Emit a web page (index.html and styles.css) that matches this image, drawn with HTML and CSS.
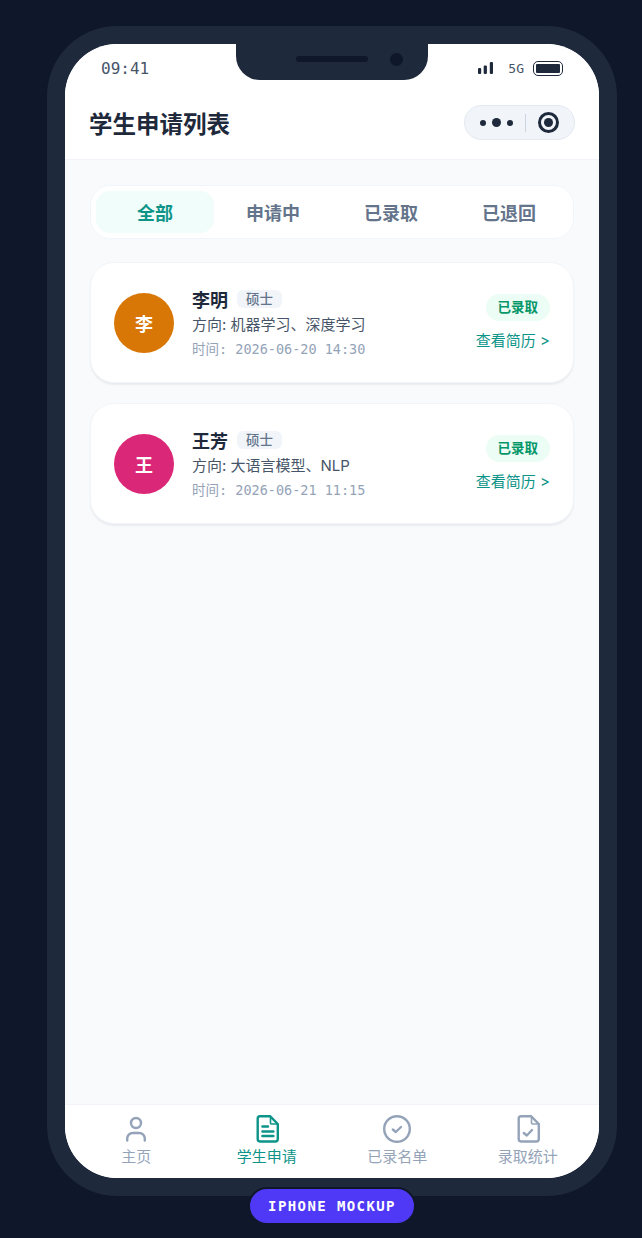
FILE: index.html
```html
<!DOCTYPE html>
<html lang="zh-CN">
<head>
  <meta charset="UTF-8" />
  <meta name="viewport" content="width=device-width, initial-scale=1.0"/>
  <title>学生申请列表</title>
  <link rel="stylesheet" href="styles.css">
</head>
<body>
  <div class="phone">
    <div class="notch">
      <span class="speaker"></span>
      <span class="camera"></span>
    </div>

    <div class="screen">
      <div class="status-bar">
        <span class="clock">09:41</span>
        <div class="status-icons">
          <svg class="signal" width="15" height="12" viewBox="0 0 15 12">
            <rect x="0" y="6" width="3.200" height="6" rx="1"></rect>
            <rect x="5.700" y="3.500" width="3.200" height="8.500" rx="1"></rect>
            <rect x="11.800" y="0" width="3.200" height="12" rx="1"></rect>
          </svg>
          <span class="net">5G</span>
          <span class="battery"><span class="battery-fill"></span></span>
        </div>
      </div>

      <header class="header">
        <h1>学生申请列表</h1>
        <div class="capsule">
          <div class="dots">
            <span class="dot"></span>
            <span class="dot big"></span>
            <span class="dot"></span>
          </div>
          <span class="capsule-line"></span>
          <span class="target"><span class="target-core"></span></span>
        </div>
      </header>

      <main class="content">
        <div class="tabs">
          <div class="tab active">全部</div>
          <div class="tab">申请中</div>
          <div class="tab">已录取</div>
          <div class="tab">已退回</div>
        </div>

        <div class="card">
          <div class="avatar orange">李</div>
          <div class="info">
            <div class="name-row">
              <span class="name">李明</span>
              <span class="degree">硕士</span>
            </div>
            <div class="topic">方向: 机器学习、深度学习</div>
            <div class="time">时间: 2026-06-20 14:30</div>
          </div>
          <div class="side">
            <span class="status">已录取</span>
            <a class="link">查看简历 &gt;</a>
          </div>
        </div>

        <div class="card">
          <div class="avatar pink">王</div>
          <div class="info">
            <div class="name-row">
              <span class="name">王芳</span>
              <span class="degree">硕士</span>
            </div>
            <div class="topic">方向: 大语言模型、NLP</div>
            <div class="time">时间: 2026-06-21 11:15</div>
          </div>
          <div class="side">
            <span class="status">已录取</span>
            <a class="link">查看简历 &gt;</a>
          </div>
        </div>
      </main>

      <nav class="tabbar">
        <div class="nav-item">
          <svg viewBox="0 0 30 30" width="30" height="30" fill="none" stroke="currentColor" stroke-width="2.400" stroke-linecap="round" stroke-linejoin="round">
            <circle cx="15" cy="9" r="5"></circle>
            <path d="M6.200 26.500v-2a5.500 5.500 0 0 1 5.500-5.500h6.600a5.500 5.500 0 0 1 5.500 5.500v2"></path>
          </svg>
          <span>主页</span>
        </div>
        <div class="nav-item active">
          <svg viewBox="0 0 30 30" width="30" height="30" fill="none" stroke="currentColor" stroke-width="2.400" stroke-linecap="round" stroke-linejoin="round">
            <path d="M8 2.200h10L25.800 10v15a2.500 2.500 0 0 1-2.500 2.500H8A2.500 2.500 0 0 1 5.700 25V4.500A2.300 2.300 0 0 1 8 2.200z"></path>
            <path d="M18.500 2.500v6.500a1 1 0 0 0 1 1h6" stroke-width="1.600"></path>
            <path d="M10.400 12.500h5.600M10.400 17.500h11M10.400 22h11"></path>
          </svg>
          <span>学生申请</span>
        </div>
        <div class="nav-item">
          <svg viewBox="0 0 30 30" width="30" height="30" fill="none" stroke="currentColor" stroke-width="2.400" stroke-linecap="round" stroke-linejoin="round">
            <circle cx="15" cy="15" r="12.800"></circle>
            <path d="M10.800 15.500l3 2.500 5.200-5"></path>
          </svg>
          <span>已录名单</span>
        </div>
        <div class="nav-item">
          <svg viewBox="0 0 30 30" width="30" height="30" fill="none" stroke="currentColor" stroke-width="2.400" stroke-linecap="round" stroke-linejoin="round">
            <path d="M8 2.200h10L25.800 10v15a2.500 2.500 0 0 1-2.500 2.500H8A2.500 2.500 0 0 1 5.700 25V4.500A2.300 2.300 0 0 1 8 2.200z"></path>
            <path d="M18.500 2.500v6.500a1 1 0 0 0 1 1h6" stroke-width="1.600"></path>
            <path d="M10.800 19l3 2.500 5.200-5.500"></path>
          </svg>
          <span>录取统计</span>
        </div>
      </nav>
    </div>

    <div class="mock-label">IPHONE MOCKUP</div>
  </div>
</body>
</html>
```

FILE: styles.css
```css
* {
  box-sizing: border-box;
}

html, body {
  margin: 0;
  height: 100%;
}

body {
  background-color: #0f172a;
  font-family: Inter, "Noto Sans CJK SC", sans-serif;
  padding: 26px 25px 0 47px;
  overflow: hidden;
}

.phone {
  position: relative;
  width: 570px;
  height: 1170px;
  padding: 18px;
  background: #1e293b;
  border-radius: 70px;
}

.notch {
  position: absolute;
  top: 18px;
  left: 189px;
  width: 192px;
  height: 36px;
  background: #1e293b;
  border-radius: 0 0 24px 24px;
  z-index: 2;
}

.speaker {
  position: absolute;
  top: 12px;
  left: 60px;
  width: 72px;
  height: 6px;
  background: #0f172a;
  border-radius: 3px;
}

.camera {
  position: absolute;
  top: 9px;
  left: 154px;
  width: 13px;
  height: 13px;
  background: #0f172a;
  border-radius: 50%;
}

.screen {
  display: flex;
  flex-direction: column;
  height: 100%;
  background: #f8fafc;
  border-radius: 52px;
  overflow: hidden;
}

.status-bar {
  display: flex;
  justify-content: space-between;
  align-items: center;
  height: 48px;
  padding: 0 36px;
  background: #fff;
  color: #475569;
}

.clock {
  font-family: "DejaVu Sans Mono", monospace;
  font-size: 16px;
}

.status-icons {
  display: flex;
  align-items: center;
}

.signal {
  fill: #1e293b;
}

.net {
  margin-left: 15px;
  font-family: "DejaVu Sans Mono", monospace;
  font-size: 13px;
}

.battery {
  display: block;
  width: 30px;
  height: 15px;
  margin-left: 9px;
  padding: 2px;
  border: 1px solid #1e293b;
  border-radius: 5px;
}

.battery-fill {
  display: block;
  height: 100%;
  background: #1e293b;
  border-radius: 1px;
}

.header {
  display: flex;
  justify-content: space-between;
  align-items: center;
  height: 68px;
  padding: 0 24px 6px 24px;
  background: #fff;
  border-bottom: 1px solid #f1f5f9;
}

.header h1 {
  margin: 0;
  color: #1e293b;
  font-size: 23.500px;
  font-weight: 700;
}

.capsule {
  display: flex;
  align-items: center;
  width: 111px;
  height: 35px;
  padding: 0 15px;
  background: #f1f5f9;
  border: 1px solid #e2e8f0;
  border-radius: 18px;
}

.dots {
  display: flex;
  align-items: center;
  gap: 6px;
}

.dot {
  width: 6px;
  height: 6px;
  background: #1e293b;
  border-radius: 50%;
}

.dot.big {
  width: 9px;
  height: 9px;
}

.capsule-line {
  width: 1px;
  height: 18px;
  margin: 0 12px;
  background: #cbd5e1;
}

.target {
  display: flex;
  justify-content: center;
  align-items: center;
  width: 21px;
  height: 21px;
  border: 3px solid #1e293b;
  border-radius: 50%;
}

.target-core {
  width: 9px;
  height: 9px;
  background: #1e293b;
  border-radius: 50%;
}

.content {
  flex: 1;
  padding: 25px 25px 0;
}

.tabs {
  display: flex;
  height: 54px;
  margin-bottom: 23px;
  padding: 5px;
  background: #fff;
  border: 1px solid #f1f5f9;
  border-radius: 20px;
}

.tab {
  flex: 1;
  display: flex;
  justify-content: center;
  align-items: center;
  color: #64748b;
  font-size: 18px;
  font-weight: 700;
  border-radius: 14px;
}

.tab.active {
  background: #f0fdfa;
  color: #0d9488;
}

.card {
  display: flex;
  align-items: center;
  height: 121px;
  margin-bottom: 20px;
  padding: 0 23px;
  background: #fff;
  border: 1px solid #f1f5f9;
  border-radius: 24px;
  box-shadow: 0 2px 2px rgba(15, 23, 42, 0.06);
}

.avatar {
  display: flex;
  justify-content: center;
  align-items: center;
  flex-shrink: 0;
  width: 60px;
  height: 60px;
  color: #fff;
  font-size: 18px;
  font-weight: 700;
  border-radius: 50%;
}

.avatar.orange {
  background: #d97706;
}

.avatar.pink {
  background: #db2777;
}

.info {
  flex: 1;
  margin-left: 18px;
}

.name-row {
  display: flex;
  align-items: center;
  gap: 9px;
  height: 24px;
}

.name {
  color: #1e293b;
  font-size: 18px;
  font-weight: 700;
}

.degree {
  padding: 0 9px;
  height: 18px;
  line-height: 18px;
  background: #f1f5f9;
  color: #64748b;
  font-size: 13.500px;
  font-weight: 500;
  border-radius: 6px;
}

.topic {
  margin-top: 4px;
  color: #475569;
  font-size: 15px;
  line-height: 20px;
}

.time {
  margin-top: 4px;
  color: #94a3b8;
  font-family: "DejaVu Sans Mono", "Noto Sans CJK SC", monospace;
  font-size: 13.500px;
  line-height: 20px;
}

.side {
  display: flex;
  flex-direction: column;
  align-items: flex-end;
  gap: 9px;
}

.status {
  height: 27px;
  line-height: 27px;
  padding: 0 12px;
  background: #ecfdf5;
  color: #059669;
  font-size: 13.500px;
  font-weight: 700;
  border-radius: 14px;
}

.link {
  color: #0d9488;
  font-size: 15px;
  line-height: 22px;
}

.tabbar {
  display: flex;
  height: 74px;
  padding: 9px 6px 0;
  background: #fff;
  border-top: 1px solid #f1f5f9;
}

.nav-item {
  flex: 1;
  display: flex;
  flex-direction: column;
  align-items: center;
  color: #94a3b8;
  font-size: 15px;
  line-height: 20px;
}

.nav-item svg {
  display: block;
  margin-bottom: 3px;
}

.nav-item.active {
  color: #0d9488;
}

.mock-label {
  position: absolute;
  top: 1161px;
  left: 201px;
  width: 168px;
  height: 38px;
  background: #4f39f6;
  border: 2px solid #0f172a;
  border-radius: 19px;
  color: #fff;
  font-family: "DejaVu Sans Mono", monospace;
  font-size: 14px;
  font-weight: 700;
  line-height: 34px;
  text-align: center;
  letter-spacing: 1.400px;
}
```
